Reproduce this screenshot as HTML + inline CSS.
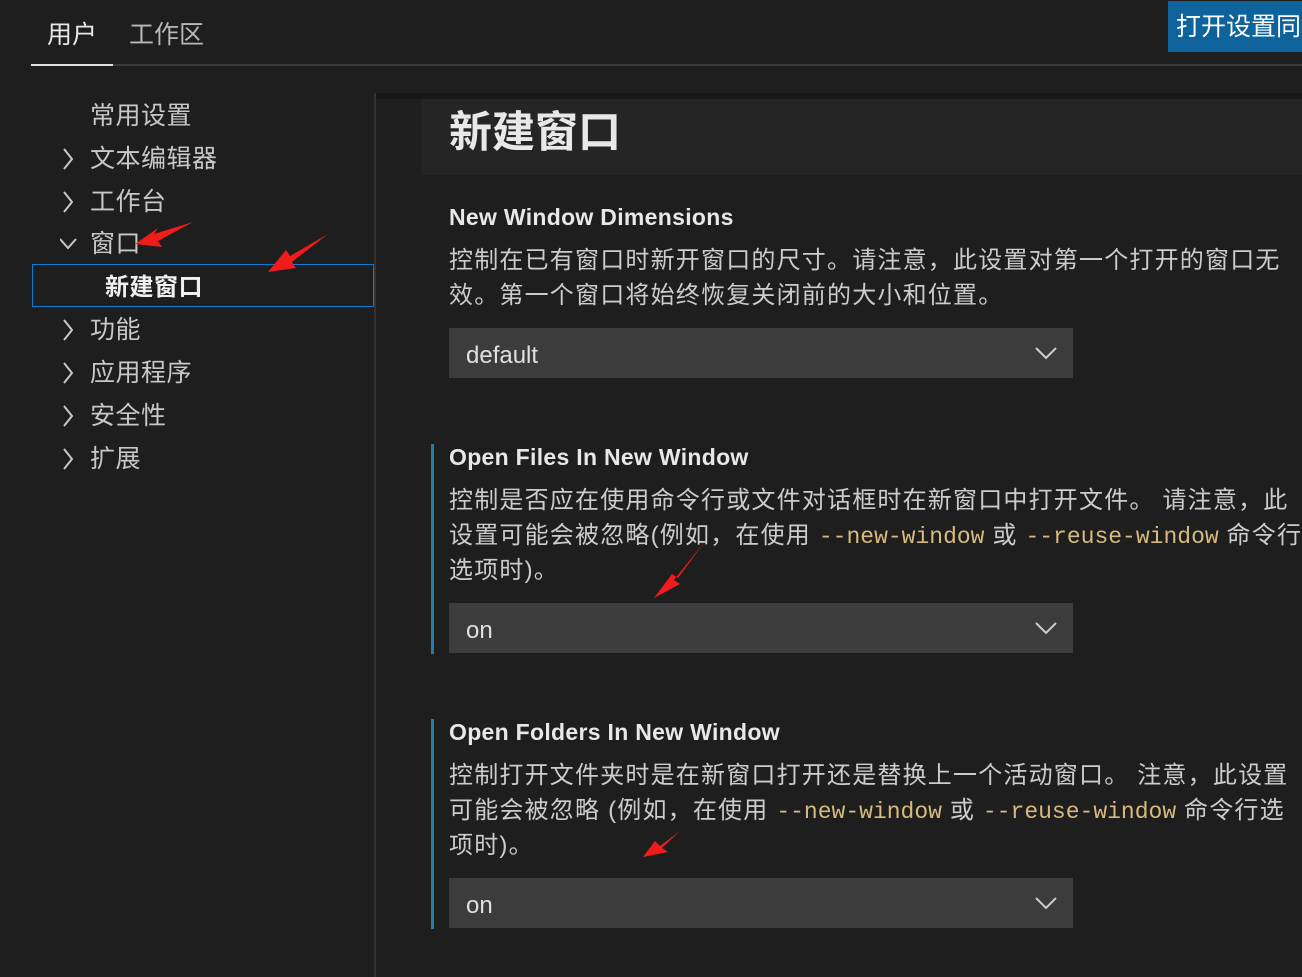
<!DOCTYPE html>
<html><head><meta charset="utf-8"><style>
*{margin:0;padding:0;box-sizing:border-box}
body{width:1302px;height:977px;background:#1e1e1e;overflow:hidden;position:relative;font-family:"Liberation Sans","Noto Sans CJK SC",sans-serif;color:#cccccc}
.a{position:absolute;white-space:nowrap;line-height:1}
.t{font-size:24px;letter-spacing:1.2px}
.code{font-family:"Liberation Mono",monospace;color:#d7ba7d;font-size:23px;letter-spacing:0}
.h{font-size:23px;font-weight:bold;color:#e8e8e8;letter-spacing:0.3px}
.dd{position:absolute;left:449px;width:624px;height:50px;background:#3c3c3c}
.dd span{position:absolute;left:17px;top:14px;font-size:24px;color:#e0e0e0}
.dd svg{position:absolute;right:16px;top:18px}
.bar{position:absolute;left:431px;width:3px;background:#1f7fab}
.nav{font-size:25px;color:#c8c8c8;letter-spacing:0.5px}
.chev{position:absolute}
</style></head><body>
<div class="a" style="left:47px;top:23px;font-size:25px;color:#e8e8e8">用户</div>
<div class="a" style="left:129px;top:23px;font-size:25px;color:#b8b8b8">工作区</div>
<div style="position:absolute;left:31px;top:64px;width:1271px;height:2px;background:#3a3a3a"></div>
<div style="position:absolute;left:31px;top:64px;width:82px;height:2px;background:#e0e0e0"></div>
<div style="position:absolute;left:1168px;top:1px;width:134px;height:51px;background:#0e639c"></div>
<div class="a" style="left:1176px;top:15px;font-size:25px;color:#fff">打开设置同</div>

<div style="position:absolute;left:374px;top:93px;width:2px;height:884px;background:#333"></div>
<div style="position:absolute;left:376px;top:93px;width:926px;height:6px;background:#181818"></div>
<div style="position:absolute;left:421px;top:99px;width:881px;height:76px;background:#252526"></div>
<div class="a" style="left:449px;top:112px;font-size:43px;font-weight:bold;color:#e8e8e8">新建窗口</div>

<div class="a nav" style="left:90px;top:104px">常用设置</div>
<div class="a nav" style="left:90px;top:147px">文本编辑器</div>
<div class="a nav" style="left:90px;top:190px">工作台</div>
<div class="a nav" style="left:90px;top:232px">窗口</div>
<div style="position:absolute;left:32px;top:264px;width:342px;height:43px;border:1px solid #0e7ad3"></div>
<div class="a" style="left:105px;top:276px;font-size:24px;font-weight:bold;color:#f0f0f0;letter-spacing:0.5px">新建窗口</div>
<div class="a nav" style="left:90px;top:318px">功能</div>
<div class="a nav" style="left:90px;top:361px">应用程序</div>
<div class="a nav" style="left:90px;top:404px">安全性</div>
<div class="a nav" style="left:90px;top:447px">扩展</div>
<svg class="chev" style="left:60px;top:0" width="20" height="480" fill="none" stroke="#c8c8c8" stroke-width="2">
<path d="M4 149 L12 159 L4 169"/><path d="M4 192 L12 202 L4 212"/><path d="M0 239 L8 248 L16 239"/>
<path d="M4 320 L12 330 L4 340"/><path d="M4 363 L12 373 L4 383"/><path d="M4 406 L12 416 L4 426"/><path d="M4 449 L12 459 L4 469"/>
</svg>

<div class="a h" style="left:449px;top:206px">New Window Dimensions</div>
<div class="a t" style="left:449px;top:249px">控制在已有窗口时新开窗口的尺寸。请注意，此设置对第一个打开的窗口无</div>
<div class="a t" style="left:449px;top:284px">效。第一个窗口将始终恢复关闭前的大小和位置。</div>
<div class="dd" style="top:328px"><span>default</span><svg width="22" height="14" fill="none" stroke="#ccc" stroke-width="2"><path d="M1 2 L11 12 L21 2"/></svg></div>

<div class="bar" style="top:444px;height:210px"></div>
<div class="a h" style="left:449px;top:446px">Open Files In New Window</div>
<div class="a t" style="left:449px;top:489px">控制是否应在使用命令行或文件对话框时在新窗口中打开文件。 请注意，此</div>
<div class="a t" style="left:449px;top:524px">设置可能会被忽略(例如，在使用 <span class="code">--new-window</span> 或 <span class="code">--reuse-window</span> 命令行</div>
<div class="a t" style="left:449px;top:559px">选项时)。</div>
<div class="dd" style="top:603px"><span>on</span><svg width="22" height="14" fill="none" stroke="#ccc" stroke-width="2"><path d="M1 2 L11 12 L21 2"/></svg></div>

<div class="bar" style="top:719px;height:210px"></div>
<div class="a h" style="left:449px;top:721px">Open Folders In New Window</div>
<div class="a t" style="left:449px;top:764px">控制打开文件夹时是在新窗口打开还是替换上一个活动窗口。 注意，此设置</div>
<div class="a t" style="left:449px;top:799px">可能会被忽略 (例如，在使用 <span class="code">--new-window</span> 或 <span class="code">--reuse-window</span> 命令行选</div>
<div class="a t" style="left:449px;top:834px">项时)。</div>
<div class="dd" style="top:878px"><span>on</span><svg width="22" height="14" fill="none" stroke="#ccc" stroke-width="2"><path d="M1 2 L11 12 L21 2"/></svg></div>

<svg style="position:absolute;left:0;top:0" width="1302" height="977">
<g fill="#f01c1c">
<polygon points="193,222 154,234 158,228 135,244 162,247 158,241"/>
<polygon points="328,234 290,256 286,250 268,272 296,268 292,262"/>
<polygon points="706,540 678,578 672,574 654,598 680,584 674,580"/>
<polygon points="680,831 660,846 655,841 643,857 668,852 662,848"/>
</g>
</svg>
</body></html>
